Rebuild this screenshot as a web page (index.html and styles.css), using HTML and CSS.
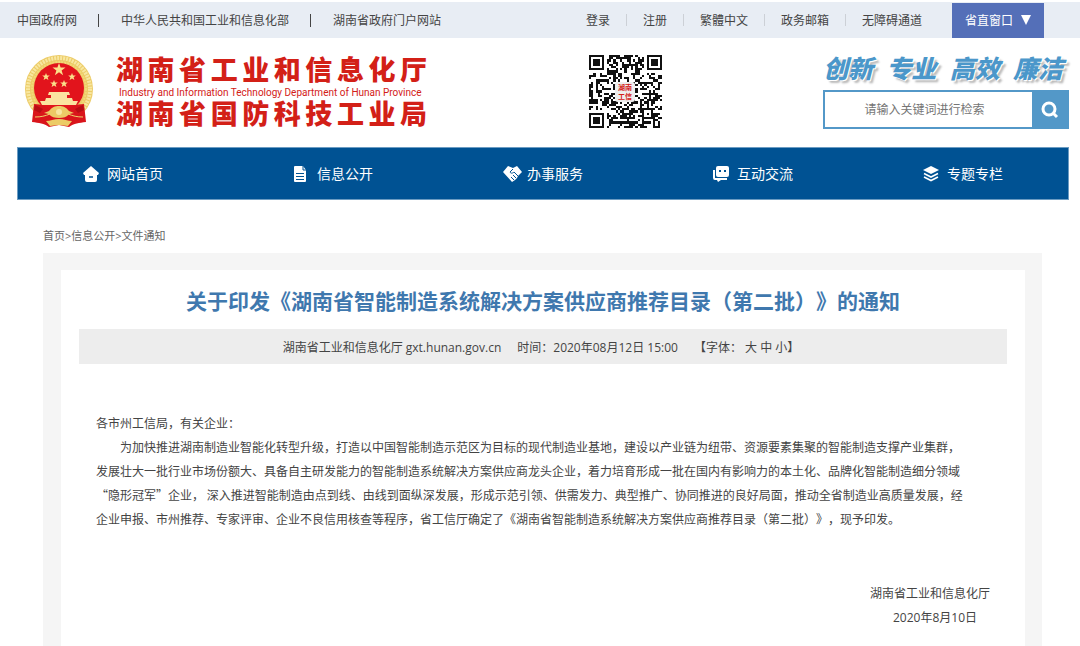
FILE: index.html
```html
<!DOCTYPE html>
<html lang="zh-CN">
<head>
    <meta charset="UTF-8">
    <meta name="viewport" content="width=device-width, initial-scale=1.0">
    <title>湖南省工业和信息化厅</title>
    <link rel="stylesheet" href="styles.css">
</head>
<body>
    <!-- 顶部链接 -->
    <div class="topbar">
        <div class="top-links">
            <a href="#">中国政府网</a>
            <a href="#">中华人民共和国工业和信息化部</a>
            <a href="#">湖南省政府门户网站</a>
        </div>
        <div class="top-tools">
            <a href="#">登录</a>
            <a href="#">注册</a>
            <a href="#">繁體中文</a>
            <a href="#">政务邮箱</a>
            <a href="#">无障碍通道</a>
        </div>
        <button type="button" class="window-button">省直窗口
            <svg width="10" height="10" viewBox="0 0 10 10"><path d="M0 0h10L5 10z" fill="#fff"/></svg>
        </button>
    </div>

    <!-- 页头 -->
    <header class="header">
        <div class="brand">
            <svg class="emblem" width="70" height="72" viewBox="0 0 70 72">
                <circle cx="35" cy="34" r="34" fill="#eccb66"/>
                <circle cx="35" cy="34" r="31" fill="none" stroke="#f8e7a0" stroke-width="4" stroke-dasharray="2 1"/>
                <circle cx="35" cy="34" r="27" fill="none" stroke="#f3d979" stroke-width="2" stroke-dasharray="2 1"/>
                <circle cx="35" cy="33" r="25" fill="#e2141c"/>
                <path d="M35 8l1.600 4.600h4.900l-3.900 2.900 1.500 4.700-4.100-2.900-4.100 2.900 1.500-4.700-3.900-2.900h4.900z" fill="#fbe08a"/>
                <g fill="#fbe08a">
                    <path id="star" d="M22 18l1 2.600h2.800l-2.200 1.700.8 2.700-2.400-1.600-2.400 1.600.8-2.700-2.200-1.700H21z"/>
                    <use href="#star" x="26"/>
                    <use href="#star" x="8" y="7"/>
                    <use href="#star" x="18" y="7"/>
                </g>
                <path d="M25 37h20l1 3H24zM27 40h16v3H27zM22 43h26l1 3H21zM16 46h38l-2 4H18z" fill="#fbe3a0"/>
                <path d="M10 49c8 0 12 3 16 5h18c4-2 8-5 16-5l2 18c-7 1-12 1-17 5l-10-2-10 2c-5-4-10-4-17-5z" fill="#d9141b"/>
                <path d="M11 50l8 4-3 4-6-3zM59 50l-8 4 3 4 6-3z" fill="#b80d14"/>
                <path d="M25 56c3-4 6-5 10-5s7 1 10 5l5 2-5 1c-2 3-6 4-10 4s-8-1-10-4l-5-1z" fill="#eccb66"/>
                <circle cx="35" cy="57" r="3" fill="#f8e7a0"/>
                <path d="M11 62c6 0 10-1 15-3M59 62c-6 0-10-1-15-3" fill="none" stroke="#efd06b"/>
                <path d="M22 66c4 0 8-2 13-2s9 2 13 2l-4 5-9-1-9 1z" fill="#eccb66"/>
            </svg>
            <div class="brand-text">
                <div class="brand-name">湖南省工业和信息化厅</div>
                <div class="brand-en">Industry and Information Technology Department of Hunan Province</div>
                <div class="brand-name">湖南省国防科技工业局</div>
            </div>
        </div>

        <div class="qr">
            <svg id="qr-code" width="73" height="73" viewBox="0 0 33 33" shape-rendering="crispEdges"></svg>
            <div class="qr-label">
                <div>湖南</div>
                <div>工信</div>
            </div>
        </div>

        <div class="header-side">
            <div class="slogan">
                <span>创新</span>
                <span>专业</span>
                <span>高效</span>
                <span>廉洁</span>
            </div>
            <form class="search">
                <input type="text" aria-label="检索" placeholder="请输入关键词进行检索">
                <button type="button" aria-label="搜索">
                    <svg width="18" height="18" viewBox="0 0 18 18" fill="none" stroke="#fff" stroke-width="3">
                        <circle cx="8" cy="8" r="6"/>
                        <path d="M12 12l4 4"/>
                    </svg>
                </button>
            </form>
        </div>
    </header>

    <!-- 主导航 -->
    <nav class="nav">
        <a href="#">
            <svg width="16" height="16" viewBox="0 0 16 16">
                <path d="M8 0L0 7l1 2h1v5a2 2 0 0 0 2 2h8a2 2 0 0 0 2-2V9h1l1-2z" fill="#fff"/>
                <path d="M6 11h4" stroke="#005293" stroke-width="1.500"/>
            </svg>
            网站首页
        </a>
        <a href="#">
            <svg width="16" height="16" viewBox="0 0 16 16">
                <path d="M2 0h8l3 4v11a1 1 0 0 1-1 1H2a1 1 0 0 1-1-1V1a1 1 0 0 1 1-1z" fill="#fff"/>
                <path d="M10 0v4h3M3 7.500h8M3 10.500h8M3 13.500h8" fill="none" stroke="#005293"/>
            </svg>
            信息公开
        </a>
        <a href="#" class="nav-wide">
            <svg width="19" height="16" viewBox="0 0 19 16">
                <path d="M5 0L0 6l9 10 3-2 2-2 1-2 4-4-5-6-4 2z" fill="#fff"/>
                <path d="M10 3L7 6c1 2 3 1 4 0l4 4M10 9l3 3M8 11l3 3" fill="none" stroke="#005293"/>
            </svg>
            办事服务
        </a>
        <a href="#">
            <svg width="16" height="16" viewBox="0 0 16 16">
                <path d="M5 0h9a2 2 0 0 1 2 2v7a2 2 0 0 1-2 2H5a2 2 0 0 1-2-2V2a2 2 0 0 1 2-2z" fill="#fff"/>
                <path d="M0 4h2v8h12v2H8l-3 2-1-2H2a2 2 0 0 1-2-2z" fill="#fff"/>
                <path d="M6 4h2v2H6zM11 4h2v2h-2z" fill="#005293"/>
            </svg>
            互动交流
        </a>
        <a href="#">
            <svg width="16" height="16" viewBox="0 0 16 16">
                <path d="M8 0l8 4-8 4-8-4z" fill="#fff"/>
                <path d="M1 7.500l7 3.500 7-3.500M1 11l7 3.500 7-3.500" fill="none" stroke="#fff" stroke-width="1.600"/>
            </svg>
            专题专栏
        </a>
    </nav>

    <!-- 正文 -->
    <main class="main">
        <div class="breadcrumb"><a href="#">首页</a>&gt;<a href="#">信息公开</a>&gt;<a href="#">文件通知</a></div>
        <div class="panel">
            <article class="article">
                <h1>关于印发《湖南省智能制造系统解决方案供应商推荐目录（第二批）》的通知</h1>
                <div class="meta">
                    <span>湖南省工业和信息化厅 gxt.hunan.gov.cn</span>
                    <span>时间：2020年08月12日 15:00</span>
                    <span>【字体： <a href="#">大</a> <a href="#">中</a> <a href="#">小</a>】</span>
                </div>
                <div class="content">
                    <p>各市州工信局，有关企业：</p>
                    <p class="indent">为加快推进湖南制造业智能化转型升级，打造以中国智能制造示范区为目标的现代制造业基地，建设以产业链为纽带、资源要素集聚的智能制造支撑产业集群，发展壮大一批行业市场份额大、具备自主研发能力的智能制造系统解决方案供应商龙头企业，着力培育形成一批在国内有影响力的本土化、品牌化智能制造细分领域“隐形冠军”企业， 深入推进智能制造由点到线、由线到面纵深发展，形成示范引领、供需发力、典型推广、协同推进的良好局面，推动全省制造业高质量发展，经企业申报、市州推荐、专家评审、企业不良信用核查等程序，省工信厅确定了《湖南省智能制造系统解决方案供应商推荐目录（第二批）》，现予印发。</p>
                </div>
                <div class="sign">
                    <p>湖南省工业和信息化厅</p>
                    <p class="sign-date">2020年8月10日</p>
                </div>
            </article>
        </div>
    </main>

    <script src="script.js"></script>
</body>
</html>
```

FILE: styles.css
```css
* {
    box-sizing: border-box;
}
body {
    margin: 0;
    padding-top: 2px;
    background: #fff;
    color: #444;
    font-family: "Open Sans", "Noto Sans CJK SC", sans-serif;
    font-size: 12px;
    text-spacing-trim: space-all;
}
a {
    color: inherit;
    text-decoration: none;
}
p {
    margin: 0;
}
svg {
    display: block;
    flex-shrink: 0;
}

/* 顶部 */
.topbar {
    display: flex;
    align-items: center;
    height: 36px;
    padding: 0 36px 0 17px;
    background: #e8edf4;
    white-space: nowrap;
}
.top-links,
.top-tools {
    display: flex;
}
.top-links a,
.top-tools a {
    display: flex;
    align-items: center;
}
.top-links a + a::before {
    content: "";
    width: 1px;
    height: 13px;
    margin: 0 22px 0 21px;
    background: #444;
}
.top-tools {
    margin-left: auto;
}
.top-tools a + a::before {
    content: "";
    width: 1px;
    height: 12px;
    margin: 0 16px;
    background: #ccd0d6;
}
.window-button {
    display: flex;
    align-items: center;
    justify-content: center;
    gap: 8px;
    width: 92px;
    height: 35px;
    margin-left: 30px;
    padding: 0;
    border: none;
    background: #546fb8;
    color: #fff;
    font-family: inherit;
    font-size: 12px;
    cursor: pointer;
}

/* 页头 */
.header {
    display: flex;
    justify-content: space-between;
    padding: 17px 11px 16px 24px;
}
.brand {
    display: flex;
    gap: 22px;
}
.brand-text {
    width: 311px;
    color: #d32017;
}
.brand-name {
    font-family: "Liberation Sans", "Noto Sans CJK SC", sans-serif;
    font-size: 27px;
    font-weight: 900;
    line-height: 32px;
    text-align: justify;
    text-align-last: justify;
}
.brand-en {
    padding-left: 3px;
    font-family: Roboto, sans-serif;
    font-size: 10px;
    line-height: 12px;
    white-space: nowrap;
}
.qr {
    display: grid;
    place-items: center;
    align-self: flex-start;
}
.qr > * {
    grid-area: 1 / 1;
}
.qr-label {
    padding: 1px 3px;
    border-radius: 3px;
    background: #eee;
    color: #d32017;
    font-family: "Liberation Sans", "Noto Sans CJK SC", sans-serif;
    font-size: 7px;
    font-weight: 700;
    line-height: 9px;
}
.header-side {
    width: 246px;
}
.slogan {
    display: flex;
    justify-content: space-between;
    padding-right: 6px;
    color: #4b97ca;
    font-size: 25px;
    font-style: italic;
    font-weight: 900;
    line-height: 26px;
    text-shadow: 1px 1px 0 #fff, 3px 3px 2px #bbb;
}
.search {
    display: flex;
    height: 39px;
    margin-top: 9px;
    border: 2px solid #5398c8;
}
.search input {
    flex: 1;
    min-width: 0;
    padding: 0 8px 0 0;
    border: none;
    font-family: inherit;
    font-size: 12px;
    text-align: center;
}
.search input::placeholder {
    color: #757575;
}
.search button {
    display: grid;
    place-items: center;
    width: 35px;
    padding: 0;
    border: none;
    background: #5398c8;
    cursor: pointer;
}

/* 导航 */
.nav {
    display: flex;
    height: 53px;
    margin: 0 11px 0 17px;
    border: 1px solid #6c9cc2;
    background: #005293;
}
.nav a {
    display: flex;
    flex: 1;
    align-items: center;
    justify-content: center;
    gap: 8px;
    color: #fff;
    font-size: 14px;
    line-height: 18px;
}
.nav .nav-wide {
    gap: 5px;
}

/* 正文 */
.main {
    padding: 26px 38px 0 43px;
}
.breadcrumb {
    height: 27px;
    color: #666;
    font-size: 11px;
    line-height: 20px;
}
.panel {
    padding: 17px 17px 0 18px;
    background: #f5f5f5;
}
.article {
    padding: 14px 18px 18px;
    background: #fff;
}
.article h1 {
    margin: 0;
    color: #3f78ae;
    font-size: 21px;
    font-weight: 700;
    line-height: 34px;
    text-align: center;
}
.meta {
    display: flex;
    align-items: center;
    justify-content: center;
    gap: 16px;
    height: 35px;
    margin-top: 11px;
    padding-right: 4px;
    background: #ededed;
}
.content {
    padding: 47px 36px 0 17px;
    font-family: "Noto Sans CJK SC", sans-serif;
    line-height: 24px;
}
.indent {
    text-indent: 2em;
}
.sign {
    margin-top: 51px;
    padding-right: 17px;
    line-height: 24px;
    text-align: right;
}
.sign-date {
    padding-right: 13px;
}
```

FILE: script.js
```js
// 绘制二维码
const SIZE = 33;
const corners = [[0, 0], [SIZE - 7, 0], [0, SIZE - 7]];
let seed = 2020;

function random() {
    seed = (seed * 1103515245 + 12345) % 2147483648;
    return seed / 2147483648;
}

function isDark(x, y) {
    const filled = random() > 0.48;
    for (const [cx, cy] of corners) {
        const ring = Math.max(Math.abs(x - cx - 3), Math.abs(y - cy - 3));
        if (ring <= 4) {
            return ring === 3 || ring <= 1;
        }
    }
    const align = Math.max(Math.abs(x - 26), Math.abs(y - 26));
    if (align <= 2) {
        return align !== 1;
    }
    return filled;
}

let path = '';
for (let y = 0; y < SIZE; y++) {
    for (let x = 0; x < SIZE; x++) {
        if (isDark(x, y)) {
            path += `M${x} ${y}h1v1h-1z`;
        }
    }
}
document.getElementById('qr-code').innerHTML = `<path d="${path}" fill="#111"/>`;
```
